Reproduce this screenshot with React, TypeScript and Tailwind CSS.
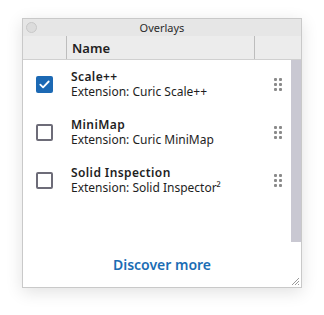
import React from "react";

const items = [
  { name: "Scale++", ext: "Extension: Curic Scale++", checked: true },
  { name: "MiniMap", ext: "Extension: Curic MiniMap", checked: false },
  { name: "Solid Inspection", ext: "Extension: Solid Inspector²", checked: false },
];

function Grip() {
  return (
    <div className="grid grid-cols-2 gap-x-[2px] gap-y-[2px]">
      {Array.from({ length: 6 }).map((_, i) => (
        <div key={i} className="w-[3px] h-[3px] rounded-[1px] bg-[#8a8a8a]" />
      ))}
    </div>
  );
}

function Check({ checked }: { checked: boolean }) {
  if (checked) {
    return (
      <div className="w-[17px] h-[17px] rounded-[2px] bg-[#1c69b4] flex items-center justify-center">
        <svg width="11" height="9" viewBox="0 0 11 9">
          <path d="M1.3 4.6 L4.1 7.3 L9.7 1.5" fill="none" stroke="white" strokeWidth="1.8" strokeLinecap="round" strokeLinejoin="round" />
        </svg>
      </div>
    );
  }
  return <div className="w-[17px] h-[17px] rounded-[2px] border-2 border-[#6d6c78] bg-white" />;
}

export default function App() {
  return (
    <div className="w-[324px] h-[315px] bg-white pt-[18px] pl-[22px]" style={{ fontFamily: '"Noto Sans", "Open Sans", sans-serif' }}>
      <div className="w-[280px] h-[270px] border border-[#c9c9c9] bg-white flex flex-col shadow-[0_4px_16px_rgba(0,0,0,0.12)]">
        <div className="h-[17px] bg-[#e6e6e6] relative flex items-center justify-center">
          <div className="absolute left-[3px] top-[3px] w-[11px] h-[11px] rounded-full bg-[#dcdcdc] border border-[#c8c8c8]" />
          <span className="text-[11px] leading-none text-[#2a2a2a]">Overlays</span>
        </div>
        <div className="h-[24px] bg-[#ececec] border-b border-[#d0d0d0] flex">
          <div className="w-[44px] border-r border-[#bdbdbd]" />
          <div className="w-[188px] border-r border-[#bdbdbd] flex items-center pl-[5px]">
            <span className="text-[13px] leading-[16px] font-semibold text-[#222]">Name</span>
          </div>
          <div className="flex-1" />
        </div>
        <div className="flex-1 flex relative">
          <div className="flex-1 flex flex-col">
            {items.map((it) => (
              <div key={it.name} className="h-[48px] flex items-center">
                <div className="w-[48px] flex justify-start pl-[13px]">
                  <Check checked={it.checked} />
                </div>
                <div className="flex-1 flex flex-col text-[12px] leading-[15px] text-[#1e1e1e]">
                  <span className="font-semibold tracking-[0.4px]">{it.name}</span>
                  <span>{it.ext}</span>
                </div>
                <div className="pr-[9px]">
                  <Grip />
                </div>
              </div>
            ))}
            <div className="mt-auto h-[45px] flex items-center justify-center pl-[10px]">
              <span className="text-[14px] leading-[18px] font-semibold text-[#1b6db4]">Discover more</span>
            </div>
          </div>
          <div className="w-[10px] flex flex-col">
            <div className="h-[182px] bg-[#c9c8d2]" />
          </div>
          <svg className="absolute right-[1px] bottom-[1px]" width="10" height="10" viewBox="0 0 10 10">
            <path d="M9 2 L2 9 M9 5 L5 9 M9 8 L8 9" stroke="#9a9a9a" strokeWidth="1" />
          </svg>
        </div>
      </div>
    </div>
  );
}
